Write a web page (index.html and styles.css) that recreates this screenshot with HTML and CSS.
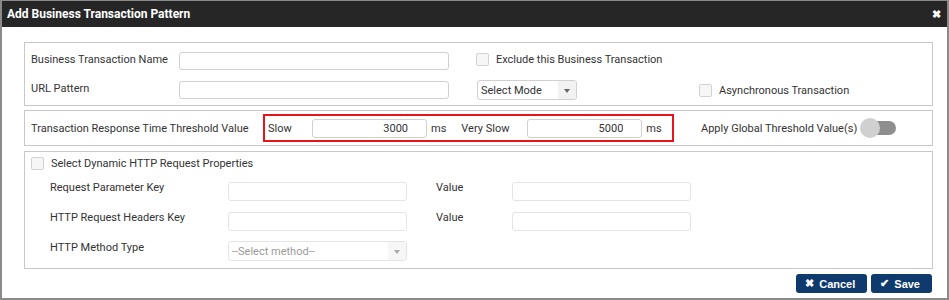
FILE: index.html
```html
<!DOCTYPE html>
<html lang="en">
<head>
    <meta charset="UTF-8">
    <title>Add Business Transaction Pattern</title>
    <link rel="stylesheet" href="styles.css">
</head>
<body>
    <div class="dialog">
        <!-- Title bar -->
        <div class="dialog-title">
            <span>Add Business Transaction Pattern</span>
            <span class="close">&#10006;</span>
        </div>

        <div class="dialog-body">
            <!-- Name / URL -->
            <div class="panel panel-main">
                <div class="row">
                    <label class="lbl lbl-main">Business Transaction Name</label>
                    <input class="txt txt-main" type="text">
                    <label class="check check-exclude"><span class="box"></span>Exclude this Business Transaction</label>
                </div>
                <div class="row">
                    <label class="lbl lbl-main">URL Pattern</label>
                    <input class="txt txt-main" type="text">
                    <div class="select select-mode">
                        <span>Select Mode</span>
                        <span class="arrow"></span>
                    </div>
                    <label class="check check-async"><span class="box"></span>Asynchronous Transaction</label>
                </div>
            </div>

            <!-- Threshold -->
            <div class="panel panel-threshold">
                <label class="lbl lbl-threshold">Transaction Response Time Threshold Value</label>
                <div class="threshold-box">
                    <span class="unit-lbl slow-lbl">Slow</span>
                    <input class="txt txt-num" type="text" value="3000">
                    <span class="ms">ms</span>
                    <span class="unit-lbl vslow-lbl">Very Slow</span>
                    <input class="txt txt-num" type="text" value="5000">
                    <span class="ms">ms</span>
                </div>
                <span class="global-lbl">Apply Global Threshold Value(s)</span>
                <span class="toggle"><span class="knob"></span></span>
            </div>

            <!-- Dynamic HTTP properties -->
            <div class="panel panel-http">
                <label class="check check-dynamic"><span class="box"></span>Select Dynamic HTTP Request Properties</label>
                <div class="http-row">
                    <label class="lbl lbl-http">Request Parameter Key</label>
                    <input class="txt txt-http" type="text" disabled>
                    <label class="lbl lbl-value">Value</label>
                    <input class="txt txt-http" type="text" disabled>
                </div>
                <div class="http-row">
                    <label class="lbl lbl-http">HTTP Request Headers Key</label>
                    <input class="txt txt-http" type="text" disabled>
                    <label class="lbl lbl-value">Value</label>
                    <input class="txt txt-http" type="text" disabled>
                </div>
                <div class="http-row">
                    <label class="lbl lbl-http">HTTP Method Type</label>
                    <div class="select select-method">
                        <span>--Select method--</span>
                        <span class="arrow"></span>
                    </div>
                </div>
            </div>

            <!-- Footer buttons -->
            <div class="actions">
                <button class="btn"><span class="btn-icon">&#10006;</span>Cancel</button>
                <button class="btn"><span class="btn-icon">&#10004;</span>Save</button>
            </div>
        </div>
    </div>
</body>
</html>
```

FILE: styles.css
```css
body {
    margin: 0;
    background-color: #ffffff;
    font-family: Roboto, "Liberation Sans", Arial, sans-serif;
    font-size: 11px;
    color: #333333;
}

.dialog {
    width: 949px;
    height: 300px;
    box-sizing: border-box;
    border: 2px solid #8a8a8a;
    border-top-width: 1px;
    background-color: #ffffff;
}

.dialog-title {
    height: 26px;
    background-color: #262626;
    color: #ffffff;
    font-size: 12px;
    font-weight: bold;
    display: flex;
    align-items: center;
    justify-content: space-between;
    padding: 0 6px 0 5px;
}

.dialog-title .close {
    font-size: 11px;
}

.dialog-body {
    padding: 15px 14px 0 22px;
}

.panel {
    border: 1px solid #c8c8c8;
}

/* first panel */
.panel-main {
    box-sizing: border-box;
    height: 64px;
    padding: 8px 0 0 6px;
}

.row {
    display: flex;
    align-items: center;
    height: 20px;
    margin-bottom: 9px;
}

.lbl {
    white-space: nowrap;
}

.lbl-main {
    width: 148px;
    margin-top: -4px;
}

.txt {
    box-sizing: border-box;
    border: 1px solid #d0d0d0;
    border-radius: 3px;
    height: 18px;
    padding: 0 4px;
    font-family: inherit;
    font-size: 11px;
    color: #333333;
    outline: none;
    background-color: #ffffff;
}

.txt-main {
    width: 270px;
    height: 18px;
}

.check {
    display: flex;
    align-items: center;
    white-space: nowrap;
}

.box {
    width: 11px;
    height: 11px;
    border: 1px solid #d2d2d2;
    border-radius: 2px;
    background-color: #f6f6f6;
    margin-right: 7px;
}

.check-exclude {
    margin-left: 27px;
    margin-top: -4px;
}

.select {
    box-sizing: border-box;
    display: flex;
    align-items: center;
    justify-content: space-between;
    border: 1px solid #d0d0d0;
    border-radius: 3px;
    height: 20px;
    padding-left: 3px;
    overflow: hidden;
}

.select .arrow {
    width: 18px;
    height: 100%;
    background-color: #f2f2f2;
    position: relative;
}

.select .arrow::after {
    content: "";
    position: absolute;
    left: 6px;
    top: 8px;
    border-left: 3px solid transparent;
    border-right: 3px solid transparent;
    border-top: 4px solid #666666;
}

.select-mode {
    width: 100px;
    margin-left: 28px;
}

.check-async {
    margin-left: 122px;
}

/* threshold panel */
.panel-threshold {
    margin-top: 4px;
    height: 36px;
    box-sizing: border-box;
    display: flex;
    align-items: center;
    padding-left: 6px;
}

.lbl-threshold {
    width: 232px;
}

.threshold-box {
    box-sizing: border-box;
    width: 411px;
    height: 28px;
    border: 2px solid #e8141b;
    display: flex;
    align-items: center;
    padding-left: 3px;
}

.slow-lbl {
    width: 44px;
}

.txt-num {
    width: 115px;
    height: 19px;
    text-align: right;
    padding-right: 18px;
}

.ms {
    margin-left: 4px;
}

.vslow-lbl {
    margin-left: 15px;
    width: 66px;
}

.global-lbl {
    margin-left: 27px;
}

.toggle {
    width: 36px;
    height: 20px;
    margin-left: 3px;
    position: relative;
    display: flex;
    align-items: center;
    justify-content: flex-end;
}

.toggle::before {
    content: "";
    width: 28px;
    height: 14px;
    border-radius: 7px;
    background-color: #8e8e8e;
}

.toggle .knob {
    position: absolute;
    left: 0;
    top: 0;
    width: 20px;
    height: 20px;
    border-radius: 50%;
    background-color: #d0d0d0;
}

/* http panel */
.panel-http {
    margin-top: 5px;
    height: 118px;
    box-sizing: border-box;
    padding: 5px 0 0 6px;
}

.check-dynamic {
    height: 12px;
    margin-bottom: 12px;
}

.http-row {
    display: flex;
    align-items: center;
    height: 20px;
    margin-bottom: 10px;
    padding-left: 19px;
}

.lbl-http {
    width: 178px;
    margin-top: -7px;
}

.txt-http {
    width: 179px;
    height: 19px;
    border-color: #e4e4e4;
}

.lbl-value {
    width: 76px;
    margin-left: 29px;
    margin-top: -7px;
}

.select-method {
    width: 179px;
    height: 20px;
    border-color: #e4e4e4;
    color: #9a9a9a;
}

.select-method .arrow {
    background-color: #f6f6f6;
}

.select-method .arrow::after {
    border-top-color: #a8a8a8;
}

/* footer */
.actions {
    display: flex;
    justify-content: flex-end;
    gap: 4px;
    margin-top: 5px;
    padding-right: 1px;
}

.btn {
    height: 19px;
    border: none;
    border-radius: 3px;
    background-color: #0f3a6e;
    color: #ffffff;
    font-family: "Liberation Sans", Arial, sans-serif;
    font-size: 11px;
    font-weight: bold;
    padding: 0 12px 0 9px;
    display: flex;
    align-items: center;
}

.btn-icon {
    font-size: 11px;
    margin-right: 5px;
}
```
